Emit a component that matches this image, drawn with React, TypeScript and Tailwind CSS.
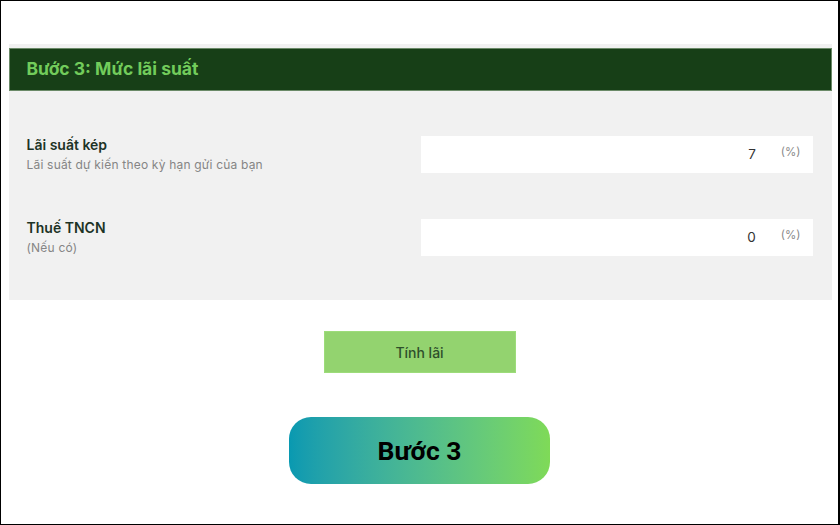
import React from 'react';

const rows = [
  { label: 'Lãi suất kép', hint: 'Lãi suất dự kiến theo kỳ hạn gửi của bạn', value: '7' },
  { label: 'Thuế TNCN', hint: '(Nếu có)', value: '0' },
];

export default function App() {
  return (
    <div
      className="w-[840px] h-[525px] bg-white border border-black border-r-2 overflow-hidden flex flex-col items-center"
      style={{ fontFamily: 'Inter, "Noto Sans", sans-serif' }}
    >
      <div className="mt-[43px] ml-[1px] w-[823px] bg-[#f1f1f1] pt-[4px]">
        <div className="h-[43px] bg-[#173f17] border border-[#6b8a68] flex items-center pl-[17px]">
          <h2 className="text-[17.5px] font-bold text-[#72cc5b]">Bước 3: Mức lãi suất</h2>
        </div>

        <div className="pt-[45px] pb-[44px] flex flex-col gap-[46px]">
          {rows.map((row) => (
            <div key={row.label} className="flex items-start">
              <div className="w-[412px] pl-[18px]">
                <div className="text-[14px] font-semibold text-[#1d3326] leading-[18px]">{row.label}</div>
                <div className="text-[12px] tracking-[0.2px] text-[#858585] mt-[4px] leading-[14px]">{row.hint}</div>
              </div>
              <div className="w-[392px] h-[37px] bg-white flex items-center justify-end pr-[12px]">
                <span className="text-[13.5px] text-[#333] mr-[25px]">{row.value}</span>
                <span className="text-[11.5px] text-[#8a8a8a] -mt-[3px]">(%)</span>
              </div>
            </div>
          ))}
        </div>
      </div>

      <button className="mt-[31px] w-[192px] h-[42px] bg-[#93d36f] border border-[#9ddc7a] text-[14px] font-medium text-[#2e4f2b]">
        Tính lãi
      </button>

      <div
        className="mt-[44px] w-[261px] h-[67px] rounded-[22px] bg-gradient-to-r from-[#0899b1] to-[#7fda57] flex items-center justify-center"
        style={{ fontFamily: 'Roboto, "Liberation Sans", sans-serif' }}
      >
        <span className="text-[26.5px] font-bold text-black">Bước 3</span>
      </div>
    </div>
  );
}
